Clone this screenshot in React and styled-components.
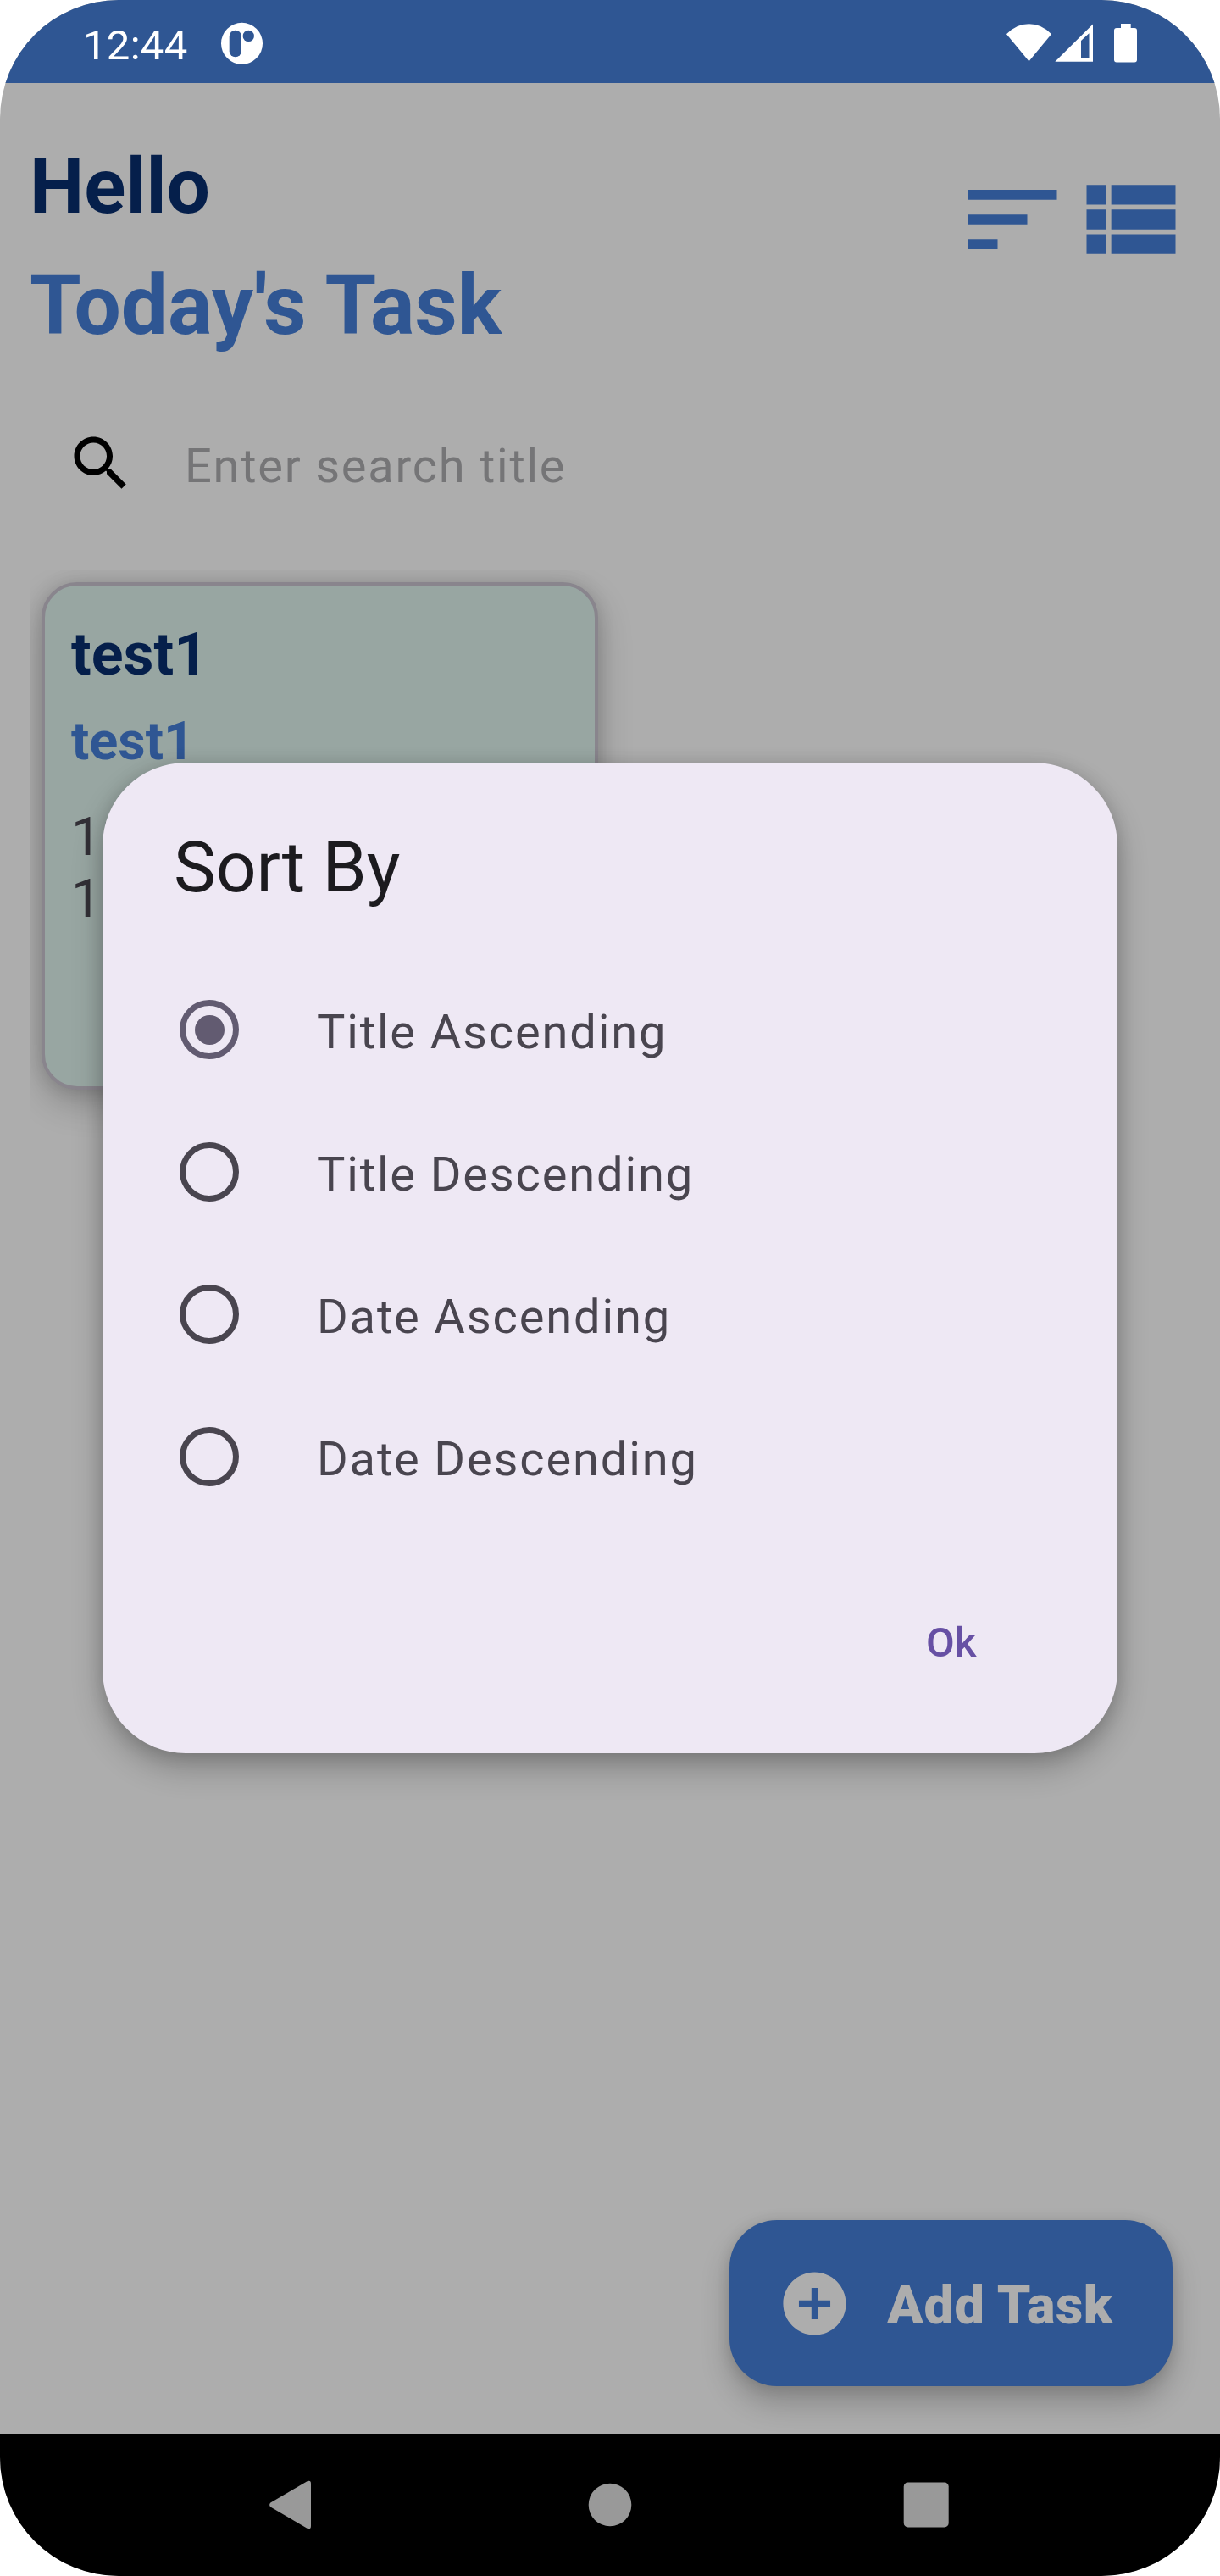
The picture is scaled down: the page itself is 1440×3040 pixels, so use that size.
import React from "react";
import styled, { createGlobalStyle } from "styled-components";

const GlobalStyle = createGlobalStyle`
  * { box-sizing: border-box; }
  html, body { margin: 0; padding: 0; background: #ffffff; }
  body { font-family: Roboto, "Noto Sans", sans-serif; }
  h1, h2, h3, p { margin: 0; }
  button { font-family: inherit; border: 0; padding: 0; background: none; }
`;

const Phone = styled.div`
  position: relative;
  display: flex;
  flex-direction: column;
  width: 1440px;
  height: 3040px;
  overflow: hidden;
  border-radius: 140px;
  background: #adadad;
`;

const StatusBar = styled.header`
  display: flex;
  align-items: flex-start;
  flex: none;
  height: 98px;
  padding: 0 98px;
  background: #2f5693;
  color: #ffffff;
`;

const Clock = styled.span`
  margin-top: 25px;
  width: 163px;
  font-size: 49px;
  line-height: 57px;
  letter-spacing: 0.3px;
`;

const StatusNotification = styled.svg`
  display: block;
  margin-top: 26px;
  width: 49px;
  height: 50px;
`;

const StatusIcons = styled.svg`
  display: block;
  margin: 28px 0 0 auto;
  width: 154px;
  height: 46px;
`;

const Screen = styled.main`
  display: flex;
  flex-direction: column;
  flex: 1;
  padding: 0 35px;
`;

const Header = styled.div`
  display: flex;
  justify-content: space-between;
  height: 350px;
`;

const Greeting = styled.div`
  padding-top: 69px;
  font-weight: 700;
`;

const Hello = styled.h1`
  font-size: 91px;
  line-height: 107px;
  font-weight: 700;
  color: #051f4b;
`;

const Today = styled.h2`
  margin-top: 29px;
  font-size: 98px;
  line-height: 115px;
  font-weight: 700;
  color: #2f5693;
`;

const HeaderActions = styled.div`
  display: flex;
  padding-top: 91px;
`;

const HeaderIcon = styled.svg`
  display: block;
  width: 140px;
  height: 140px;
  fill: #2f5693;
`;

const SearchField = styled.div`
  display: flex;
  align-items: flex-start;
  height: 225px;
  padding: 57px 42px 0;
`;

const SearchIcon = styled.svg`
  display: block;
  width: 84px;
  height: 84px;
  fill: #000000;
`;

const SearchHint = styled.span`
  margin: 12px 0 0 57px;
  font-size: 56px;
  line-height: 66px;
  letter-spacing: 1.75px;
  color: #757577;
`;

const TaskGrid = styled.section`
  display: grid;
  grid-template-columns: 1fr 1fr;
  align-items: start;
  flex: 1;
  overflow: hidden;
`;

const TaskCard = styled.article`
  margin: 14px;
  height: 599px;
  padding: 40px 31px;
  border: 4px solid #89858d;
  border-radius: 42px;
  background: #98a6a2;
  box-shadow: 0 16px 40px rgba(0, 0, 0, 0.22), 0 0 20px rgba(0, 0, 0, 0.12);
`;

const CardTitle = styled.h3`
  font-size: 70px;
  line-height: 82px;
  font-weight: 700;
  color: #051f4b;
`;

const CardSubtitle = styled.p`
  margin-top: 25px;
  font-size: 63px;
  line-height: 74px;
  font-weight: 700;
  color: #2f5693;
`;

const CardDate = styled.p`
  margin-top: 39px;
  font-size: 63px;
  line-height: 73px;
  color: #322f36;
`;

const AddButton = styled.button`
  position: absolute;
  right: 56px;
  bottom: 224px;
  display: flex;
  align-items: center;
  width: 523px;
  height: 196px;
  padding-left: 56px;
  border-radius: 56px;
  background: #2f5693;
  color: #adadad;
  font-size: 63px;
  line-height: 74px;
  font-weight: 900;
  letter-spacing: 0.55px;
  box-shadow: 0 20px 34px rgba(0, 0, 0, 0.22), 0 2px 16px rgba(0, 0, 0, 0.12);
`;

const AddIcon = styled.svg`
  display: block;
  width: 89px;
  height: 89px;
  margin-right: 41px;
  fill: #adadad;
`;

const AddLabel = styled.span`
  margin-top: 6px;
`;

const Dialog = styled.section`
  position: absolute;
  left: 121px;
  top: 900px;
  display: flex;
  flex-direction: column;
  width: 1198px;
  height: 1169px;
  padding: 75px 84px 0;
  border-radius: 98px;
  background: #eee8f4;
  box-shadow: 0 18px 36px rgba(0, 0, 0, 0.24), 0 2px 20px rgba(0, 0, 0, 0.14);
`;

const DialogTitle = styled.h2`
  font-size: 84px;
  line-height: 98px;
  font-weight: 400;
  letter-spacing: -0.2px;
  color: #1c1b1f;
`;

const Options = styled.div`
  display: flex;
  flex-direction: column;
  margin-top: 58px;
`;

const Option = styled.label`
  display: flex;
  align-items: center;
  height: 168px;
  padding-left: 7px;
`;

const Radio = styled.span`
  display: grid;
  place-items: center;
  width: 70px;
  height: 70px;
  border: 7px solid ${(p) => (p.$checked ? "#625b71" : "#49454f")};
  border-radius: 50%;

  &::after {
    content: "";
    width: 35px;
    height: 35px;
    border-radius: 50%;
    background: ${(p) => (p.$checked ? "#625b71" : "transparent")};
  }
`;

const OptionLabel = styled.span`
  margin: 5px 0 0 92px;
  font-size: 56px;
  line-height: 66px;
  letter-spacing: 1.85px;
  color: #49454f;
`;

const DialogAction = styled.button`
  align-self: flex-end;
  margin: 107px 82px 0 0;
  font-size: 49px;
  line-height: 58px;
  font-weight: 500;
  letter-spacing: 0.35px;
  color: #6750a4;
`;

const NavBar = styled.nav`
  display: flex;
  align-items: center;
  flex: none;
  height: 168px;
  padding-left: 317px;
  background: #000000;
`;

const NavIcon = styled.svg`
  display: block;
  width: 58px;
  height: 58px;
  margin-right: ${(p) => p.$gap || 0}px;
  fill: #999999;
`;

const sortOptions = ["Title Ascending", "Title Descending", "Date Ascending", "Date Descending"];

export default function App() {
  return (
    <>
      <GlobalStyle />
      <Phone>
        <StatusBar>
          <Clock>12:44</Clock>
          <StatusNotification viewBox="261 26 49 50">
            <circle cx="285.5" cy="51.3" r="24.5" fill="#ffffff" />
            <rect x="270.7" y="35.7" width="14.3" height="31.6" rx="7.15" fill="#2f5693" />
            <circle cx="293.3" cy="42.4" r="6.7" fill="#2f5693" />
          </StatusNotification>
          <StatusIcons viewBox="1188 28 154 46" fill="#ffffff">
            <path d="M1188 40.3Q1199 28.2 1214.5 28.2T1241 40.3L1214.5 72.3Z" />
            <path fillRule="evenodd" d="M1245.3 72.7L1290 28.5V72.7ZM1276 48V68.3H1285.5V39.3Z" />
            <path d="M1323 28H1334.7V33H1339Q1342 33 1342 36V70.6Q1342 73.6 1339 73.6H1318Q1315 73.6 1315 70.6V36Q1315 33 1318 33H1323Z" />
          </StatusIcons>
        </StatusBar>

        <Screen>
          <Header>
            <Greeting>
              <Hello>Hello</Hello>
              <Today>Today's Task</Today>
            </Greeting>
            <HeaderActions>
              <HeaderIcon viewBox="0 0 24 24">
                <path d="M3 18h6v-2H3v2zM3 6v2h18V6H3zm0 7h12v-2H3v2z" />
              </HeaderIcon>
              <HeaderIcon viewBox="0 0 24 24">
                <path d="M3 14h4v-4H3v4zm0 5h4v-4H3v4zM3 9h4V5H3v4zm5 5h13v-4H8v4zm0 5h13v-4H8v4zM8 5v4h13V5H8z" />
              </HeaderIcon>
            </HeaderActions>
          </Header>

          <SearchField>
            <SearchIcon viewBox="0 0 24 24">
              <path d="M15.5 14h-.79l-.28-.27C15.41 12.59 16 11.11 16 9.5 16 5.91 13.09 3 9.5 3S3 5.91 3 9.5 5.91 16 9.5 16c1.61 0 3.09-.59 4.23-1.57l.27.28v.79l5 4.99L20.49 19l-4.99-5zm-6 0C7.01 14 5 11.99 5 9.5S7.01 5 9.5 5 14 7.01 14 9.5 11.99 14 9.5 14z" />
            </SearchIcon>
            <SearchHint>Enter search title</SearchHint>
          </SearchField>

          <TaskGrid>
            <TaskCard>
              <CardTitle>test1</CardTitle>
              <CardSubtitle>test1</CardSubtitle>
              <CardDate>
                11
                <br />
                1
              </CardDate>
            </TaskCard>
          </TaskGrid>
        </Screen>

        <NavBar>
          <NavIcon viewBox="317 2927 58 58" $gap={316}>
            <path d="M319.3 2953.5L362.5 2928.2Q367 2926.5 367 2931V2981Q367 2985.5 362.5 2983.8L319.3 2958.5Q317 2956 319.3 2953.5Z" />
          </NavIcon>
          <NavIcon viewBox="691 2927 58 58" $gap={315}>
            <circle cx="720" cy="2956" r="25.3" />
          </NavIcon>
          <NavIcon viewBox="1064 2927 58 58">
            <rect x="1066.7" y="2929.5" width="53" height="53" rx="5" />
          </NavIcon>
        </NavBar>

        <AddButton>
          <AddIcon viewBox="0 0 24 24">
            <path d="M12 2C6.48 2 2 6.48 2 12s4.48 10 10 10 10-4.48 10-10S17.52 2 12 2zm5 11h-4v4h-2v-4H7v-2h4V7h2v4h4v2z" />
          </AddIcon>
          <AddLabel>Add Task</AddLabel>
        </AddButton>

        <Dialog>
          <DialogTitle>Sort By</DialogTitle>
          <Options>
            {sortOptions.map((label, i) => (
              <Option key={label}>
                <Radio $checked={i === 0} />
                <OptionLabel>{label}</OptionLabel>
              </Option>
            ))}
          </Options>
          <DialogAction>Ok</DialogAction>
        </Dialog>
      </Phone>
    </>
  );
}
